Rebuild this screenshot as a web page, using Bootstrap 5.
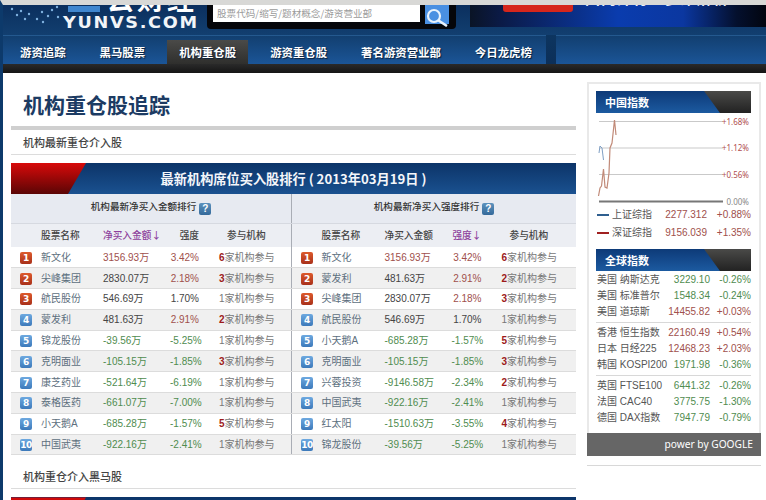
<!DOCTYPE html>
<html lang="zh-CN">

<head>
    <meta charset="UTF-8" />
    <meta name="viewport" content="width=device-width, initial-scale=1" />
    <title>机构重仓股追踪</title>

    <link href="https://cdn.jsdelivr.net/npm/bootstrap@5.3.0/dist/css/bootstrap.min.css" rel="stylesheet" />
    <style>
        html, body { height: 500px; overflow: hidden; }
        body { background: #fff; font-family: "Liberation Sans", "Noto Sans CJK SC", sans-serif; font-size: 10px; color: #555; border-top: 5px solid #d8d8d6; border-left: 3px solid #0d3a6b; }

        .top-head { height: 30px; margin-left: -3px; background: linear-gradient(#0b2f5e, #123f70); overflow: hidden; }
        .logo-box { width: 207px; height: 30px; display: grid; flex: none; overflow: hidden; }
        .logo-box > * { grid-area: 1 / 1; }
        .logo-cn { margin: -20px 0 0 107px; width: 92px; height: 27px; font: 700 27px/27px "Noto Sans CJK SC", sans-serif; letter-spacing: 3px; color: #fff; white-space: nowrap; overflow: hidden; }
        .logo-en { margin: 10px 0 0 63px; height: 16px; font: 700 15px/16px "DejaVu Sans", sans-serif; letter-spacing: 1.4px; color: #f2f5f8; transform: scaleX(1.18); transform-origin: left center; white-space: nowrap; }
        .search-box { width: 249px; height: 24px; flex: none; background: #05060a; border-radius: 0 0 4px 4px; padding: 0 7px 0 6px; }
        .search-box .form-control { width: 208px; height: 17px; padding: 0 4px; border: 0; border-radius: 0; font-size: 9.6px; line-height: 17px; font-family: "Noto Sans CJK SC", sans-serif; }
        .search-box .form-control::placeholder { color: #9a9a9a; opacity: 1; }
        .search-go { width: 24px; height: 19px; padding: 0; margin-left: 5px; border: 0; border-radius: 0; background: #4a90e2; display: block; }
        .banner-box { width: 296px; height: 22px; margin-left: 14px; flex: none; overflow: hidden; background: linear-gradient(90deg, #0a1426 0%, #0b1a45 10%, #0a3cae 50%, #0b37a0 72%, #04102e 90%, #02050f 100%); padding-left: 33px; }
        .banner-pill { width: 70px; height: 7px; background: #d6261c; border-radius: 0 0 3px 3px; flex: none; }
        .banner-txt { margin: -15px 0 0 12px; height: 17px; font: 700 15px/15px "Noto Sans CJK SC", sans-serif; letter-spacing: 1px; color: #e8eefc; white-space: nowrap; }

        .main-nav { height: 29px; margin-left: -3px; background: linear-gradient(#123f70, #1b5597); border-top: 1px solid #24598f; }
        .main-nav .nav { padding: 4px 0 0 8px; gap: 10px; width: 546px; flex: none; }
        .main-nav .nav-link { height: 24px; padding: 0 12px; font: 700 11.4px/25px "Noto Sans CJK SC", sans-serif; color: #fff; text-shadow: 1px 1px 1px #0a1f3a; white-space: nowrap; }
        .main-nav .nav-link.active { background: linear-gradient(#4a4a48, #2f2f2d); }
        .nav-gap { width: 10px; flex: none; margin-top: -1px; background: linear-gradient(#0d3560, #0c2f58); }
        .nav-rest { flex: 1; }
        .black-strip { height: 9px; margin-left: -3px; background: linear-gradient(#2a2a2a, #151515); border-left: 3px solid #151515; }

        .page-cols { padding-left: 8px; }
        .main-col { width: 565px; flex: none; }
        .page-title { margin: 0; padding-top: 16px; height: 46px; font: 700 21px/30px "Noto Sans CJK SC", sans-serif; color: #1c3b63; padding-left: 12px; }
        .thick-bar { height: 4px; margin-top: 7px; background: #cfcfcf; }
        .sec-title { height: 25px; padding-left: 12px; border-bottom: 1px solid #dcdcdc; font: 500 11px/25px "Noto Sans CJK SC", sans-serif; color: #444; margin: 0; }
        .sec-title.next { margin-top: 9px; }

        .rank-panel { margin-top: 8px; }
        .rank-head { height: 31px; display: flex; background: linear-gradient(#0c3468, #1a5190); overflow: hidden; }
        .rank-red { width: 75px; flex: none; background: linear-gradient(#d80a0a, #5a0505); clip-path: polygon(0 0, 100% 0, 76% 100%, 0 100%); }
        .rank-head h2 { margin: 0 0 0 -75px; flex: 1; text-align: center; font: 700 13.2px/31px "Noto Sans CJK SC", sans-serif; color: #f4f6fa; }
        .rank-pair { background: #fff; }
        .rank-tb { table-layout: fixed; margin: 0; width: 280px; --bs-table-bg: transparent; --bs-table-color: #666; border-collapse: collapse; }
        .rank-tb.second { width: 285px; border-left: 1px solid #a9adb5; }
        .rank-tb th, .rank-tb td { padding: 0; border: 0; white-space: nowrap; vertical-align: middle; box-shadow: none; }
        .rank-tb .sub-row th { height: 29px; padding-bottom: 2px; background: #e7eaf1; border-bottom: 1px solid #d6d9e0; text-align: center; font: 500 9.6px "Noto Sans CJK SC", sans-serif; color: #333; }
        .rank-tb .col-row th { height: 24px; background: #eceef3; font: 500 9.7px "Noto Sans CJK SC", sans-serif; color: #444; }
        .rank-tb .col-row th.sorted { color: #8c3f9c; }
        .rank-tb .data-row td { height: 20.8px; padding-top: 1px; font-size: 10px; line-height: 14px; color: #777; }
        .rank-tb .data-row:nth-child(even) td { background: #f0f0f0; border-top: 1px solid #dcdcdc; border-bottom: 1px solid #dcdcdc; }
        .rank-tb .to-right { text-align: right; }
        .rank-tb .org-cell { padding-left: 20px; }
        .rank-tb .org-head { padding-left: 28px; }
        .rank-tb td.stock-name { color: #5d6f7e; }
        .rank-tb td.val-up { color: #a0504c; }
        .rank-tb td.val-down { color: #4f8c4f; }
        .rank-tb td.val-flat { color: #444; }
        .org-num { color: #9c1a1a; font-weight: 700; }
        .rank-tb td .rank-no { display: block; width: 12px; height: 12px; margin-left: 9px; border-radius: 2px; font: 700 9px/12px "DejaVu Sans", sans-serif; text-align: center; color: #fff; letter-spacing: -.5px; }
        .rank-no.hot { background: linear-gradient(#dd5a2c, #a8301a); }
        .rank-no.cold { background: linear-gradient(#6ea9e0, #3c79ba); }
        .help-mark { display: inline-block; width: 12px; height: 12px; margin-left: 3px; border-radius: 2px; background: linear-gradient(#5d92bd, #34699a); color: #fff; font: 700 10px/12px "Liberation Sans", sans-serif; text-align: center; vertical-align: -2px; }

        .side-col { width: 174px; margin: 9px 0 0 11px; flex: none; }
        .side-box { border: 2px solid #e9e9e9; border-bottom: 0; padding-top: 7px; }
        .side-in { padding: 0 8px 0 7px; }
        .side-head { height: 22px; padding-left: 9px; display: flex; justify-content: space-between; font: 700 11px/22px "Noto Sans CJK SC", sans-serif; color: #fff; background: linear-gradient(#0d3a78, #1c5aa0); }
        .side-head::after { content: ""; width: 47px; background: linear-gradient(#4a4a48, #222); clip-path: polygon(0 0, 100% 0, 100% 100%, 16px 100%); }
        .side-head.later { margin-top: 7px; }
        .chart-svg { display: block; margin-top: 5px; }
        .chart-svg text { font: 8px "Noto Sans", sans-serif; text-anchor: end; }
        .quote-row { height: 16px; line-height: 16px; font-size: 10px; white-space: nowrap; padding-left: 1px; }
        .quote-row .q-name { flex: 1; color: #555; }
        .quote-row .q-val { text-align: right; }
        .quote-row .q-pct { width: 41px; text-align: right; }
        .legend-row { height: 18px; line-height: 18px; }
        .legend-row .q-val { width: 46px; }
        .legend-row .q-pct { width: 44px; }
        .legend-row .q-name { display: flex; align-items: center; gap: 3px; }
        .legend-dash { width: 12px; height: 1px; border-top: 2px solid #2f5f8f; flex: none; }
        .legend-dash.red { border-top-color: #a02020; }
        .q-up { color: #a0504c; }
        .q-down { color: #4f8c4f; }
        .q-sep { height: 1px; margin: 2px 0; background: #d8d8d8; }
        .world-list { margin-top: 1px; }
        .side-foot { height: 23px; margin: 7px -2px 0; padding-right: 8px; background: #666; color: #fff; text-align: right; font: 10.2px/23px "Noto Sans", sans-serif; }
        .side-rule { height: 1px; margin-top: 9px; background: #d8d8d8; }
    </style>
</head>

<body>
    <div class="top-head d-flex">
        <div class="logo-box">
            <svg width="110" height="30" viewBox="0 0 110 30">
                <g fill="#7fb2e0">
                    <circle cx="12" cy="4" r="1.2" /><circle cx="21" cy="6" r="1.2" /><circle cx="17" cy="10" r="1.2" />
                    <circle cx="29" cy="9" r="1.2" /><circle cx="25" cy="14" r="1.2" /><circle cx="37" cy="14" r="1.2" />
                    <circle cx="43" cy="17" r="1.2" /><circle cx="48" cy="11" r="1.2" /><circle cx="42" cy="7" r="1.2" />
                    <circle cx="52" cy="5" r="1.2" /><circle cx="58" cy="12" r="1.2" /><circle cx="57" cy="2" r="1.2" />
                </g>
                <rect x="68" y="1" width="32" height="6" fill="#3f86cf" />
            </svg>
            <div class="logo-cn">云财经</div>
            <div class="logo-en">YUNVS.COM</div>
        </div>
        <form class="search-box d-flex align-items-start" onsubmit="return false">
            <input type="text" class="form-control" placeholder="股票代码/缩写/题材概念/游资营业部" />
            <button class="btn search-go" type="submit" aria-label="搜索">
                <svg width="24" height="19" viewBox="0 0 24 19">
                    <circle cx="9" cy="8" r="6" fill="none" stroke="#e8f2fc" stroke-width="2.2" />
                    <path d="M13.5 12.5 L22 18" stroke="#e8f2fc" stroke-width="2.6" />
                </svg>
            </button>
        </form>
        <div class="banner-box d-flex align-items-start">
            <div class="banner-pill"></div>
            <div class="banner-txt">国内外行业多维解析</div>
        </div>
    </div>

    <div class="main-nav d-flex">
        <ul class="nav flex-nowrap">
            <li class="nav-item"><a class="nav-link" href="#">游资追踪</a></li>
            <li class="nav-item"><a class="nav-link" href="#">黑马股票</a></li>
            <li class="nav-item"><a class="nav-link active" href="#">机构重仓股</a></li>
            <li class="nav-item"><a class="nav-link" href="#">游资重仓股</a></li>
            <li class="nav-item"><a class="nav-link" href="#">著名游资营业部</a></li>
            <li class="nav-item"><a class="nav-link" href="#">今日龙虎榜</a></li>
        </ul>
        <div class="nav-gap"></div>
        <div class="nav-rest"></div>
    </div>
    <div class="black-strip"></div>

    <div class="page-cols d-flex">
        <div class="main-col">
            <h1 class="page-title">机构重仓股追踪</h1>
            <div class="thick-bar"></div>
            <h3 class="sec-title">机构最新重仓介入股</h3>

            <div class="rank-panel">
                <div class="rank-head">
                    <div class="rank-red"></div>
                    <h2>最新机构席位买入股排行 ( 2013年03月19日 )</h2>
                </div>
                <div class="rank-pair d-flex align-items-start">
                    <table class="table rank-tb">
                        <colgroup><col style="width:30px"><col style="width:62px"><col style="width:67px"><col style="width:29px"><col></colgroup>
                        <thead>
                            <tr class="sub-row"><th colspan="5">机构最新净买入金额排行<span class="help-mark">?</span></th></tr>
                            <tr class="col-row"><th></th><th>股票名称</th><th class="sorted">净买入金额↓</th><th class="to-right">强度</th><th class="org-head">参与机构</th></tr>
                        </thead>
                        <tbody id="amount-rows"></tbody>
                    </table>
                    <table class="table rank-tb second">
                        <colgroup><col style="width:30px"><col style="width:63px"><col style="width:67px"><col style="width:30px"><col></colgroup>
                        <thead>
                            <tr class="sub-row"><th colspan="5">机构最新净买入强度排行<span class="help-mark">?</span></th></tr>
                            <tr class="col-row"><th></th><th>股票名称</th><th>净买入金额</th><th class="to-right sorted">强度↓</th><th class="org-head">参与机构</th></tr>
                        </thead>
                        <tbody id="power-rows"></tbody>
                    </table>
                </div>
            </div>

            <h3 class="sec-title next">机构重仓介入黑马股</h3>
            <div class="rank-panel">
                <div class="rank-head"><div class="rank-red"></div></div>
            </div>
        </div>

        <div class="side-col">
            <div class="side-box">
                <div class="side-in">
                    <div class="side-head">中国指数</div>
                    <svg class="chart-svg" width="157" height="88" viewBox="0 0 157 88">
                        <g stroke-width="1">
                            <path d="M3 3.5H127M3 30H127M3 56.5H127" stroke="#c9c9c9" />
                            <path d="M3 83.5H127" stroke="#777" stroke-width="2" />
                        </g>
                        <polyline fill="none" stroke="#7f9fc4" stroke-width="1" points="3,35 4,28 6,30 7.5,42" />
                        <polyline fill="none" stroke="#c18a78" stroke-width="1.2" points="2.5,78 4,70 5.5,68 7.5,51 9,69 11,70 13,55 14,30 16,25 18.5,2 20,17" />
                        <text x="153" y="7" fill="#b05050">+1.68%</text>
                        <text x="153" y="33" fill="#b05050">+1.12%</text>
                        <text x="153" y="60" fill="#b05050">+0.56%</text>
                        <text x="153" y="87" fill="#888">0.00%</text>
                    </svg>
                    <div class="quote-row legend-row d-flex">
                        <span class="q-name"><i class="legend-dash"></i>上证综指</span>
                        <span class="q-val q-up">2277.312</span><span class="q-pct q-up">+0.88%</span>
                    </div>
                    <div class="quote-row legend-row d-flex">
                        <span class="q-name"><i class="legend-dash red"></i>深证综指</span>
                        <span class="q-val q-up">9156.039</span><span class="q-pct q-up">+1.35%</span>
                    </div>
                    <div class="side-head later">全球指数</div>
                    <div id="world-rows" class="world-list"></div>
                </div>
                <div class="side-foot">power by GOOGLE</div>
            </div>
            <div class="side-rule"></div>
        </div>
    </div>

    <script src="https://cdn.jsdelivr.net/npm/bootstrap@5.3.0/dist/js/bootstrap.bundle.min.js"></script>
    <script>
        (function () {
            // name, amount, strength, number of institutions
            var byAmount = [
                ['新文化', '3156.93万', '3.42%', 6], ['尖峰集团', '2830.07万', '2.18%', 3], ['航民股份', '546.69万', '1.70%', 1],
                ['蒙发利', '481.63万', '2.91%', 2], ['锦龙股份', '-39.56万', '-5.25%', 1], ['克明面业', '-105.15万', '-1.85%', 3],
                ['康芝药业', '-521.64万', '-6.19%', 1], ['泰格医药', '-661.07万', '-7.00%', 1], ['小天鹅A', '-685.28万', '-1.57%', 5],
                ['中国武夷', '-922.16万', '-2.41%', 1]
            ];
            var byPower = [
                ['新文化', '3156.93万', '3.42%', 6], ['蒙发利', '481.63万', '2.91%', 2], ['尖峰集团', '2830.07万', '2.18%', 3],
                ['航民股份', '546.69万', '1.70%', 1], ['小天鹅A', '-685.28万', '-1.57%', 5], ['克明面业', '-105.15万', '-1.85%', 3],
                ['兴蓉投资', '-9146.58万', '-2.34%', 2], ['中国武夷', '-922.16万', '-2.41%', 1], ['红太阳', '-1510.63万', '-3.55%', 4],
                ['锦龙股份', '-39.56万', '-5.25%', 1]
            ];
            var world = [
                ['美国 纳斯达克', '3229.10', '-0.26%'], ['美国 标准普尔', '1548.34', '-0.24%'], ['美国 道琼斯', '14455.82', '+0.03%'], null,
                ['香港 恒生指数', '22160.49', '+0.54%'], ['日本 日经225', '12468.23', '+2.03%'], ['韩国 KOSPI200', '1971.98', '-0.36%'], null,
                ['英国 FTSE100', '6441.32', '-0.26%'], ['法国 CAC40', '3775.75', '-1.30%'], ['德国 DAX指数', '7947.79', '-0.79%']
            ];

            function tone(text, big) {
                if (text.charAt(0) === '-') return 'val-down';
                return big ? 'val-up' : 'val-flat';
            }

            function fillRanks(id, rows) {
                var html = '';
                for (var i = 0; i < rows.length; i++) {
                    var r = rows[i];
                    var pct = parseFloat(r[2]);
                    // positive percentages are red, except the 1.70% row which stays dark
                    var pctClass = pct < 0 ? 'val-down' : (pct >= 2 ? 'val-up' : 'val-flat');
                    var amtClass = tone(r[1], parseFloat(r[1]) > 3000);
                    var org = r[3] > 1 ? '<span class="org-num">' + r[3] + '</span>' : r[3];
                    html += '<tr class="data-row">' +
                        '<td><span class="rank-no ' + (i < 3 ? 'hot' : 'cold') + '">' + (i + 1) + '</span></td>' +
                        '<td class="stock-name">' + r[0] + '</td>' +
                        '<td class="' + amtClass + '">' + r[1] + '</td>' +
                        '<td class="to-right ' + pctClass + '">' + r[2] + '</td>' +
                        '<td class="org-cell">' + org + '家机构参与</td></tr>';
                }
                document.getElementById(id).innerHTML = html;
            }

            function fillWorld() {
                var html = '';
                for (var i = 0; i < world.length; i++) {
                    if (!world[i]) {
                        html += '<div class="q-sep"></div>';
                        continue;
                    }
                    var c = world[i][2].charAt(0) === '-' ? 'q-down' : 'q-up';
                    html += '<div class="quote-row d-flex"><span class="q-name">' + world[i][0] + '</span>' +
                        '<span class="q-val ' + c + '">' + world[i][1] + '</span>' +
                        '<span class="q-pct ' + c + '">' + world[i][2] + '</span></div>';
                }
                document.getElementById('world-rows').innerHTML = html;
            }

            fillRanks('amount-rows', byAmount);
            fillRanks('power-rows', byPower);
            fillWorld();
        })();
    </script>
</body>

</html>
